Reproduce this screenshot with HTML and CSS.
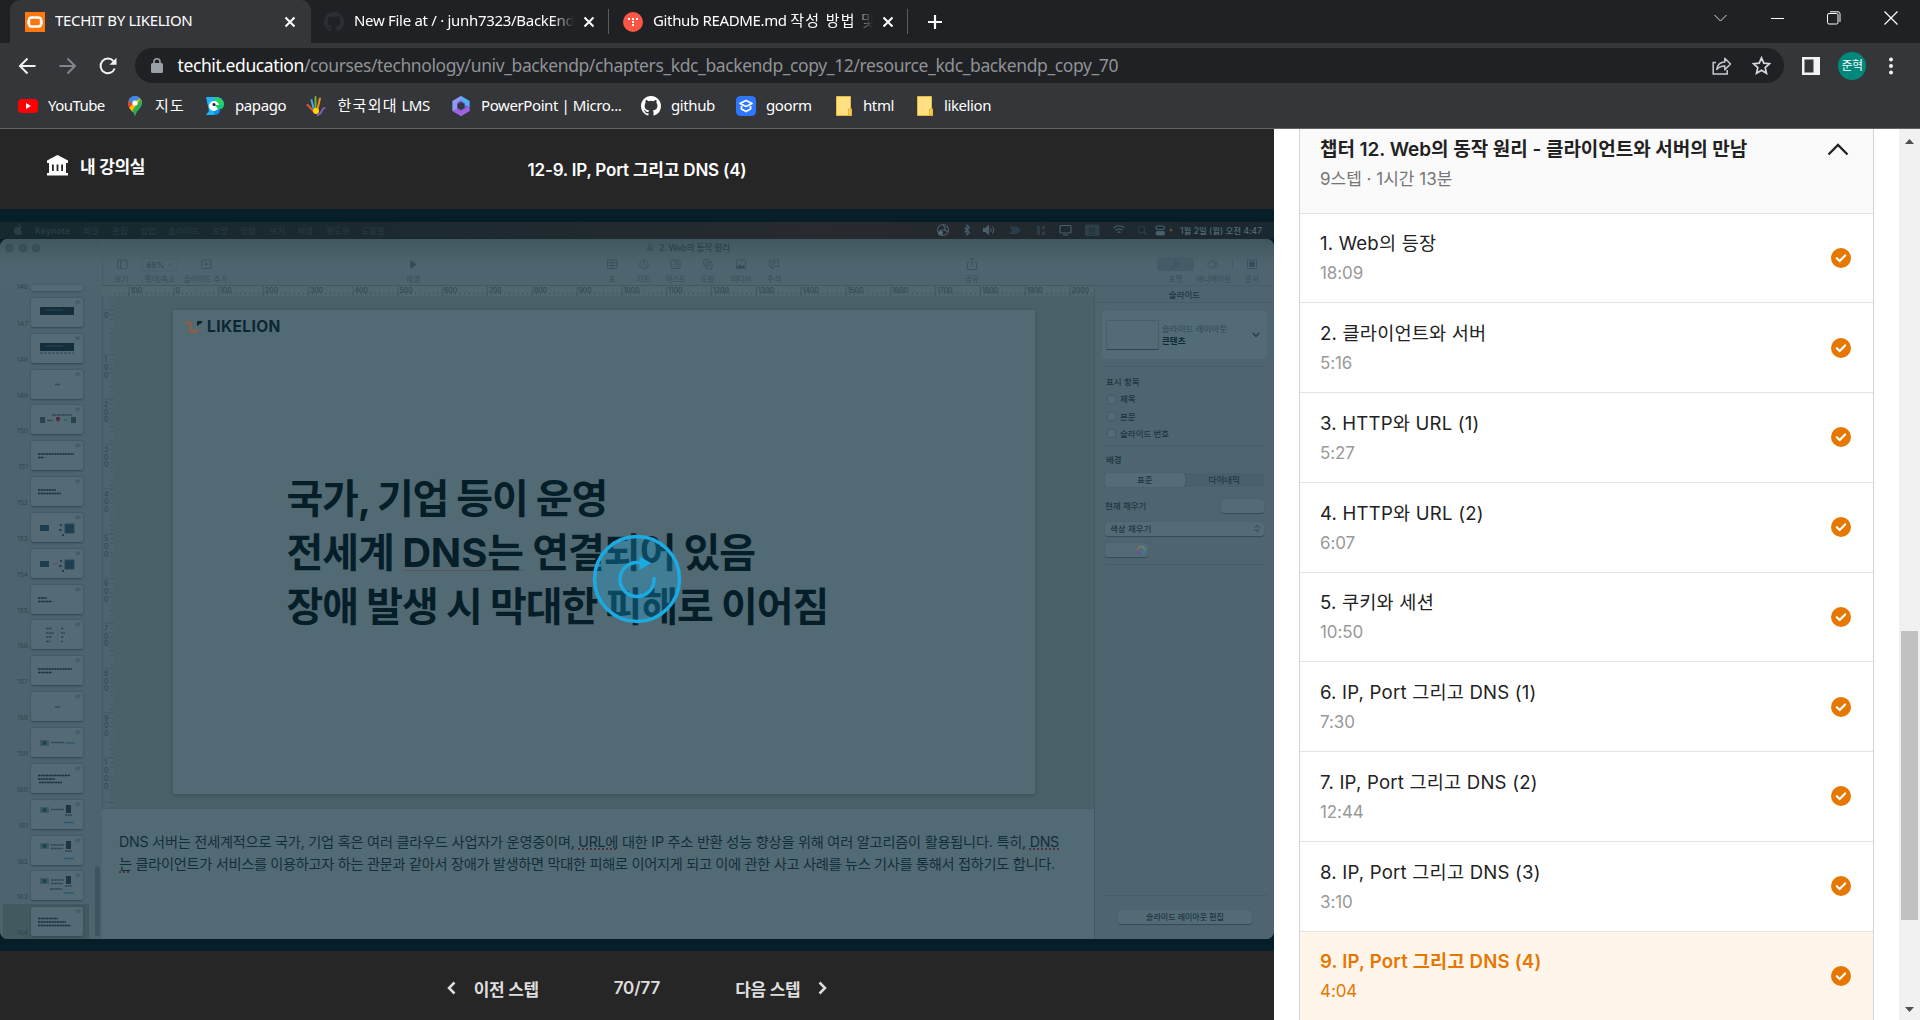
FILE: index.html
```html
<!DOCTYPE html>
<html lang="ko">
<head>
<meta charset="utf-8">
<title>TECHIT BY LIKELION</title>
<link rel="stylesheet" href="styles.css">
</head>
<body>
<svg class="defs" width="0" height="0">
  <symbol id="x" viewBox="0 0 12 12"><path d="M1.5 1.5l9 9M10.5 1.5l-9 9" stroke="#fff" stroke-width="2"/></symbol>
  <symbol id="octo" viewBox="0 0 16 16"><path fill-rule="evenodd" d="M8 0C3.58 0 0 3.58 0 8c0 3.54 2.29 6.53 5.47 7.59.4.07.55-.17.55-.38 0-.19-.01-.82-.01-1.49-2.01.37-2.53-.49-2.69-.94-.09-.23-.48-.94-.82-1.13-.28-.15-.68-.52-.01-.53.63-.01 1.08.58 1.23.82.72 1.21 1.87.87 2.33.66.07-.52.28-.87.51-1.07-1.78-.2-3.64-.89-3.64-3.95 0-.87.31-1.59.82-2.15-.08-.2-.36-1.02.08-2.12 0 0 .67-.21 2.2.82a7.6 7.6 0 014 0c1.53-1.04 2.2-.82 2.2-.82.44 1.1.16 1.92.08 2.12.51.56.82 1.27.82 2.15 0 3.07-1.87 3.75-3.65 3.95.29.25.54.73.54 1.48 0 1.07-.01 1.93-.01 2.2 0 .21.15.46.55.38A8.01 8.01 0 0016 8c0-4.42-3.58-8-8-8z"/></symbol>
  <symbol id="check" viewBox="0 0 20 20"><circle cx="10" cy="10" r="10" fill="#e67700"/><path d="M5.8 10.2l2.9 2.8 5.4-5.6" fill="none" stroke="#fff" stroke-width="2.2" stroke-linecap="round"/></symbol>
  <symbol id="folder" viewBox="0 0 16 20"><path d="M.5.5h14v12.500H16V19.500H.5z" fill="#ffe082" stroke="#e5b93c"/><path d="M12.500 19v-6h2.500v6z" fill="#ffd54f" stroke="#d9ab2e" stroke-width=".8"/></symbol>
  <symbol id="memo" viewBox="0 0 6 6"><path d="M.5.5h5v3.300H3l-1.500 1.700V3.800h-1z" fill="#465d68"/></symbol>
  <pattern id="ticks-h" x="71" width="4.48" height="10" patternUnits="userSpaceOnUse"><path d="M.5 7v3" stroke="#3b525d" stroke-width=".7"/></pattern>
  <pattern id="ticks-v" y="14" width="12" height="4.48" patternUnits="userSpaceOnUse"><path d="M8 .5h3.500" stroke="#3d545f" stroke-width=".7"/></pattern>
</svg>

<header class="browser">
  <div class="tabs">
    <div class="tab active">
      <svg width="20" height="20" viewBox="0 0 20 20"><rect width="20" height="20" fill="#ff7710"/><rect x="4" y="5.500" width="12" height="9" rx="2.500" fill="none" stroke="#fff" stroke-width="2.300"/><path d="M2.500 8v4.500M17.500 8v4.500" stroke="#ffd2ab"/></svg>
      <span class="tab-title t1">TECHIT BY LIKELION</span>
      <svg class="close" width="12" height="12"><use href="#x"/></svg>
    </div>
    <div class="tab second">
      <svg width="20" height="20" fill="#2b2f35"><use href="#octo"/></svg>
      <span class="tab-title fade t2">New File at / · junh7323/BackEnd</span>
      <svg class="close" width="12" height="12"><use href="#x"/></svg>
    </div>
    <div class="tab third">
      <svg width="20" height="20" viewBox="0 0 20 20"><circle cx="10" cy="10" r="10" fill="#ff5544"/><path d="M5 7h2M9 7h2M13 7h2M9 10h2M9 13h2" stroke="#fff" stroke-width="2"/></svg>
      <span class="tab-title fade t3">Github README.md <span class="ko">작성 방법 및</span></span>
      <svg class="close" width="12" height="12"><use href="#x"/></svg>
    </div>
    <svg class="plus" width="16" height="16" stroke="#fff" stroke-width="2.200"><path d="M8 1v14M1 8h14"/></svg>
    <div class="win">
      <svg width="15" height="14" fill="none" stroke="#ddd"><path d="M1.500 4l6 6 6-6"/></svg>
      <svg width="13" height="14" stroke="#fff"><path d="M0 7.500h13"/></svg>
      <svg width="14" height="14" fill="none" stroke="#fff"><rect x=".5" y="2.500" width="10.500" height="10.500" rx="1.500"/><path d="M3 .8h8a2 2 0 012 2v8"/></svg>
      <svg width="14" height="14" stroke="#fff" stroke-width="1.200"><path d="M.5.5l13 13M13.500.5l-13 13"/></svg>
    </div>
  </div>

  <div class="toolbar">
    <svg class="nav" width="18" height="18" fill="none" stroke="#f1f3f4" stroke-width="2"><path d="M17.500 9H2M9.500 1.500L2 9l7.500 7.500"/></svg>
    <svg class="nav" width="18" height="18" fill="none" stroke="#82858a" stroke-width="2"><path d="M.5 9H16M8.500 1.500L16 9l-7.500 7.500"/></svg>
    <svg class="nav" width="18" height="18" fill="none" stroke="#f1f3f4" stroke-width="2"><path d="M15.700 11.500A7.300 7.300 0 1114.500 4.200"/><path d="M17.500.8v7h-7z" fill="#f1f3f4" stroke="none"/></svg>
    <div class="omnibox">
      <svg width="12" height="15" viewBox="0 0 12 15"><rect y="5" width="12" height="10" rx="1.500" fill="#9aa0a6"/><path d="M3 6V3.800a3 3 0 016 0V6" fill="none" stroke="#9aa0a6" stroke-width="1.600"/></svg>
      <span class="url"><b>techit.education</b>/courses/technology/univ_backendp/chapters_kdc_backendp_copy_12/resource_kdc_backendp_copy_70</span>
      <svg class="share" width="20" height="20" fill="none" stroke="#c7cacf" stroke-width="1.500"><path d="M4 6.500H1.200V18h14v-4"/><path d="M4.800 13.500c.8-5 4-7.400 8-7.400V2.200l5.700 5.800-5.700 5.700V10c-3.600 0-6 1-8 3.500z" stroke-linejoin="round"/></svg>
      <svg class="star" width="19" height="19" viewBox="0 0 19 19" fill="none" stroke="#d5d8dc" stroke-width="1.700"><path d="M9.500 1.800l2.300 5.400 5.800.5-4.400 3.900 1.300 5.700-5-3-5 3 1.300-5.700-4.400-3.900 5.800-.5z"/></svg>
    </div>
    <svg class="side" width="18" height="18"><path d="M0 0h18v18H0z" fill="#f1f3f4"/><path d="M2.500 2.500h9v13h-9z" fill="#35363a"/></svg>
    <div class="avatar">준혁</div>
    <svg class="dots" width="4" height="18" fill="#f1f3f4"><circle cx="2" cy="2.500" r="2"/><circle cx="2" cy="9" r="2"/><circle cx="2" cy="15.500" r="2"/></svg>
  </div>

  <nav class="bookmarks">
    <a class="bm b1"><svg width="20" height="20"><rect y="3" width="20" height="14" rx="4" fill="#f00"/><path d="M8 7l5 3-5 3z" fill="#fff"/></svg><span>YouTube</span></a>
    <a class="bm b2"><svg width="20" height="20" viewBox="0 0 20 20"><path d="M10 0a7 7 0 00-7 7c0 5 5.500 7 7 13 1.500-6 7-8 7-13a7 7 0 00-7-7z" fill="#34a853"/><path d="M3.500 4.500L8 8.500l-3.500 3.800C3.200 10.500 2.400 7 3.500 4.500z" fill="#ea4335"/><path d="M4.200 12l8-9C15 1 17 4 17 7l-9.500 9z" fill="#fbbc04"/><path d="M10 0a7 7 0 00-6.200 3.900L8 7.500 15 2a7 7 0 00-5-2z" fill="#4285f4"/><path d="M15.500 2.700C18 6 17 10 14 13c-2 2-3 4-4 7-.7-3-1.500-4.200-2.600-5.500z" fill="#34a853"/><circle cx="10" cy="7" r="2.600" fill="#fff"/></svg><span class="ko">지도</span></a>
    <a class="bm b3"><svg width="20" height="20" viewBox="0 0 20 20"><path d="M1 1h10c6 0 8 4 8 8h-6l-3 10H1l3-4z" fill="#22b3f5"/><path d="M10 1c6 0 9 4 9 8h-9z" fill="#25d366"/><path d="M9 19c5 0 6-3 6-6l-6-3z" fill="#0b8de8"/><circle cx="9" cy="10" r="5" fill="#fff"/><path d="M10 9h9c0 3-3 5-6 4z" fill="#0ecb70"/><circle cx="9" cy="8.500" r="1.500" fill="#16203a"/></svg><span>papago</span></a>
    <a class="bm b4"><svg width="20" height="20" viewBox="0 0 20 20" fill="none" stroke-width="2" stroke-linecap="round"><path d="M5.500 4l2.200 9" stroke="#48a9d9"/><path d="M9.500 1v12" stroke="#66b32e"/><path d="M14 2.500L11.500 13" stroke="#f18a21"/><path d="M1.500 9l6 6" stroke="#e4572e"/><path d="M18.500 12c-3 0-2 6-7 7" stroke="#7a5cc0"/><circle cx="10" cy="15" r="3" fill="#ffd400"/></svg><span><span class="ko">한국외대</span> LMS</span></a>
    <a class="bm b5"><svg width="20" height="20" viewBox="0 0 20 20"><path d="M10 0l8.500 5v10L10 20l-8.500-5V5z" fill="#7b5be0"/><path d="M10 0l8.500 5v6L14 9V7l-4-2.500z" fill="#4bb4f5"/><path d="M10 0L1.500 5v10l4.500-2V7l4-3z" fill="#8f9bf0"/><path d="M6 13l4 2.500 8.500-5.500V15L10 20l-8.500-5z" fill="#a064e0"/><path d="M10 6l3.500 2v4L10 14l-3.500-2V8z" fill="#35363a"/></svg><span>PowerPoint | Micro...</span></a>
    <a class="bm b6"><svg width="20" height="20" fill="#fff"><use href="#octo"/></svg><span>github</span></a>
    <a class="bm b7"><svg width="20" height="20" viewBox="0 0 20 20"><rect width="20" height="20" rx="4.500" fill="#2f76ff"/><path d="M10 4.500l6 3-6 3-6-3z" fill="none" stroke="#fff" stroke-width="1.700" stroke-linejoin="round"/><path d="M5.500 10v3L10 15.500l4.500-2.500v-3" fill="none" stroke="#fff" stroke-width="1.800"/></svg><span>goorm</span></a>
    <a class="bm b8"><svg width="16" height="20"><use href="#folder"/></svg><span>html</span></a>
    <a class="bm b9"><svg width="16" height="20"><use href="#folder"/></svg><span>likelion</span></a>
  </nav>
</header>

<main class="page">
  <section class="lecture">
    <div class="lecture-head">
      <a class="room"><svg width="21" height="21" viewBox="0 0 21 21" fill="#fff"><path d="M10.500 0L21 5.500V8H0V5.500z"/><path d="M2 8h17v10H2z"/><path d="M0 18h21v2.500H0z"/><path d="M5 9.500h1.800V16H5zM9.600 9.500h1.800V16H9.600zM14.200 9.500H16V16h-1.800z" fill="#262626"/></svg><span>내 강의실</span></a>
      <h1>12-9. IP, Port 그리고 DNS (4)</h1>
    </div>

    <div class="video">
      <svg class="menubar" width="1274" height="17" font-size="8.500">
        <g fill="#2a3c44">
          <path d="M18 5c2-1.500 4-.5 4 0-1.500 1-1.500 4 .5 5-.8 2.500-2 3.500-4 2.500-3 1.500-5.500-2-4.500-5.500.5-2 2.500-2.800 4-2zM18 4c0-1.500 1-2.500 2-2.500 0 1.500-1 2.500-2 2.500z"/>
          <text x="35" y="11.500" font-weight="700" textLength="35">Keynote</text>
          <g text-anchor="middle"><text x="91" y="11.500">파일</text><text x="120" y="11.500">편집</text><text x="148" y="11.500">삽입</text><text x="184" y="11.500">슬라이드</text><text x="220" y="11.500">포맷</text><text x="248" y="11.500">정렬</text><text x="277" y="11.500">보기</text><text x="305" y="11.500">재생</text><text x="338" y="11.500">윈도우</text><text x="373" y="11.500">도움말</text></g>
        </g>
        <g fill="none" stroke="#46606c" stroke-width="1.100">
          <circle cx="943" cy="8" r="5.500"/><path d="M943 3c3 3 3 5 0 5s-4 2-4 4M943 8c2 0 4 1 5 2"/><circle cx="940.500" cy="11" r="2" fill="#56717d"/>
          <path d="M964.500 5.500l5 5-2.500 2.500V3l2.500 2.500-5 5"/>
          <path d="M983.500 6.500h2l3-2.500v8l-3-2.500h-2z" fill="#46606c"/><path d="M990.500 6q1.500 2 0 4M992.500 4.500q2.500 3.500 0 7"/>
          <path d="M1009 4.500h8l4 3.500-4 4h-8l3-4z" fill="#2b3e47" stroke="none"/><path d="M1037 4h3v9h-3zM1042 4h3v3.500h-3zM1042 9.500h3v3.500h-3z" fill="#2b3e47" stroke="none"/>
          <rect x="1060" y="3.500" width="11" height="7.500" rx="1"/><path d="M1063 13h5"/>
          <path d="M1113.500 6q5.500-4.500 11 0M1115.500 8.300q3.500-2.800 7 0M1117.500 10.500q1.500-1.200 3 0"/>
          <g stroke="#2d4049"><circle cx="1141.500" cy="7.500" r="3.200"/><path d="M1144 10l2.500 2.500"/></g>
          <rect x="1156" y="4" width="8.500" height="3.500" rx="1.700"/><rect x="1156" y="9.500" width="8.500" height="3.500" rx="1.700" fill="#46606c"/>
        </g>
        <rect x="1085" y="2.500" width="14.500" height="11.500" rx="2" fill="#2d4049"/><text x="1092.200" y="11.500" text-anchor="middle" fill="#1a2a32">한</text>
        <circle cx="1171" cy="8" r="1.500" fill="#694c22"/>
        <text x="1180" y="11.500" fill="#526d79" font-weight="500" textLength="82">1월 2일 (월) 오전 4:47</text>
      </svg>

      <div class="keynote">
        <svg class="kn-toolbar" width="1274" height="46" font-size="7.500">
          <g fill="#38505a" stroke="#2f4751" stroke-width=".6"><circle cx="9.500" cy="9" r="3.800"/><circle cx="23" cy="9" r="3.800"/><circle cx="36" cy="9" r="3.800"/></g>
          <text x="659" y="12" font-size="8.800" font-weight="500" fill="#2b424d" textLength="71">2. Web의 동작 원리</text>
          <rect x="647" y="7" width="6" height="5" rx="1" fill="#3c535e"/><path d="M648.500 7V6a1.500 1.500 0 013 0v1" fill="none" stroke="#3c535e"/>
          <path d="M102.500 0v46" stroke="#465d67"/>
          <rect x="142" y="19" width="35" height="13" rx="2.500" fill="none" stroke="#485f6a"/>
          <rect x="1157" y="18" width="37" height="14" rx="3" fill="#455c66"/>
          <path d="M1232.500 20v10" stroke="#455c66"/>
          <text x="146.500" y="28.500" font-size="8" fill="#314853">68%</text>
          <g fill="none" stroke="#3a525d">
            <rect x="117.500" y="21" width="9.500" height="8.500" rx="1"/><path d="M120.500 21v8.500M168.500 24.500l2 2 2-2"/>
            <rect x="201.500" y="21" width="9.500" height="8.500" rx="1"/><path d="M206 23v4.500M204 25.200h4.500"/>
            <path d="M410.500 21.500v8l6-4z" fill="#334b56"/>
            <rect x="607.500" y="21" width="9.500" height="8.500" rx="1"/><path d="M607.500 23.800h9.500M607.500 26.600h9.500M612.200 21v8.500"/>
            <circle cx="644" cy="25.500" r="4.300"/><path d="M644 21v4.500l3 3"/>
            <rect x="671" y="21" width="9" height="8.500" rx="1"/><text x="675.500" y="28" font-size="6.500" text-anchor="middle" stroke="none" fill="#334b56">가</text>
            <rect x="703.500" y="20.500" width="6" height="6.500" rx="2"/><rect x="706" y="23" width="6" height="7" rx="1"/>
            <rect x="736.500" y="21" width="9" height="8.500" rx="1"/><path d="M736.500 29.500l3-4 2 2 1.500-1.500 2.500 3.500z" fill="#334b56"/>
            <path d="M769.500 21h9v6.500h-4l-2.500 2.500v-2.500h-2.500zM771.500 23.200h5M771.500 25.200h3"/>
            <path d="M969.500 23.500h-2v7h9v-7h-2M972 27v-8M969.800 21l2.200-2.200 2.200 2.200"/>
            <path d="M1174.500 20l4.500 4.500-3 1.500-3 4.500-1.500-1.500 3.500-4z"/>
            <path d="M1207.500 25.500l4-4.500 4 4.500-4 4.500zM1213.500 21l4.500 4.500-4.500 4.500"/>
            <rect x="1247.500" y="21" width="9" height="8.500"/><rect x="1249.500" y="23" width="5" height="4.500" fill="#334b56"/>
          </g>
          <g text-anchor="middle" fill="#384f5a"><text x="121.500" y="42.500">보기</text><text x="160" y="42.500">확대/축소</text><text x="205.500" y="42.500">슬라이드 추가</text><text x="413" y="42.500">재생</text><text x="612" y="42.500">표</text><text x="643.500" y="42.500">차트</text><text x="675.500" y="42.500">텍스트</text><text x="707.500" y="42.500">도형</text><text x="741" y="42.500">미디어</text><text x="774" y="42.500">주석</text><text x="972" y="42.500">공유</text><text x="1175.500" y="42.500">포맷</text><text x="1213.500" y="42.500">애니메이션</text><text x="1252" y="42.500">문서</text></g>
        </svg>

        <div class="kn-body">
          <div class="navigator">
            <div class="row cut"><i>146</i><span class="thumb"></span></div>
            <div class="row"><i>147</i><svg class="thumb" width="52" height="29"><use href="#memo" x="44" y="2" width="6" height="6"/><path d="M9 9h34v8H9z" fill="#142f3b"/><path d="M14 12h18" stroke="#2b4752"/></svg></div>
            <div class="row"><i>148</i><svg class="thumb" width="52" height="29"><use href="#memo" x="44" y="2" width="6" height="6"/><path d="M9 9h34v8H9z" fill="#142f3b"/><path d="M14 12h18" stroke="#2b4752"/><path d="M9 19h34" stroke="#304954" stroke-dasharray="3 1"/></svg></div>
            <div class="row"><i>149</i><svg class="thumb" width="52" height="29"><use href="#memo" x="44" y="2" width="6" height="6"/><path d="M24 14.500h5" stroke="#284d68" stroke-width="1.500"/></svg></div>
            <div class="row"><i>150</i><svg class="thumb" width="52" height="29"><use href="#memo" x="44" y="2" width="6" height="6"/><path d="M21 10h20M16 15.500h6" stroke="#2f4a55" stroke-width="1.300" stroke-dasharray="4 .5"/><path d="M9 12h5v6H9zM40 12h5v6h-5z" fill="#29434d"/><path d="M25 12h4v3l-2 2-2-2z" fill="#502e40"/><path d="M33 14h3v2h-3z" fill="#2d6b50"/></svg></div>
            <div class="row"><i>151</i><svg class="thumb" width="52" height="29"><use href="#memo" x="44" y="2" width="6" height="6"/><path d="M7 13h36M7 16.500h6" class="ink"/></svg></div>
            <div class="row"><i>152</i><svg class="thumb" width="52" height="29"><use href="#memo" x="44" y="2" width="6" height="6"/><path d="M7 13h18M7 16.500h23" class="ink"/></svg></div>
            <div class="row"><i>153</i><svg class="thumb" width="52" height="29"><use href="#memo" x="44" y="2" width="6" height="6"/><path d="M9 12h9v6H9z" fill="#1e3e50"/><path d="M34 11h9v9h-9z" fill="#1e3e50" stroke="#2b4855"/><path d="M29 12h2M28 17h3M31 22h2" class="ink"/></svg></div>
            <div class="row"><i>154</i><svg class="thumb" width="52" height="29"><use href="#memo" x="44" y="2" width="6" height="6"/><path d="M9 12h9v6H9z" fill="#1e3e50"/><path d="M34 11h9v9h-9z" fill="#1e3e50" stroke="#2b4855"/><path d="M29 12h2M28 17h3M31 22h2" class="ink"/><path d="M22 14.500h5" stroke="#6b4b58"/></svg></div>
            <div class="row"><i>155</i><svg class="thumb" width="52" height="29"><use href="#memo" x="44" y="2" width="6" height="6"/><path d="M7 13h9M7 16.500h14" class="ink"/></svg></div>
            <div class="row"><i>156</i><svg class="thumb" width="52" height="29"><use href="#memo" x="44" y="2" width="6" height="6"/><path d="M15 8.500h6M15 13h8M15 17h6M15 21.500h4M30 8.500h3M30 13h4M30 17h3M30 21.500h2" class="ink soft"/><path d="M26.500 7v16" stroke="#476069" stroke-width=".6"/></svg></div>
            <div class="row"><i>157</i><svg class="thumb" width="52" height="29"><use href="#memo" x="44" y="2" width="6" height="6"/><path d="M7 13h34M7 16.500h14" class="ink"/></svg></div>
            <div class="row"><i>158</i><svg class="thumb" width="52" height="29"><use href="#memo" x="44" y="2" width="6" height="6"/><path d="M24 15h5" class="ink soft"/></svg></div>
            <div class="row"><i>159</i><svg class="thumb" width="52" height="29"><use href="#memo" x="44" y="2" width="6" height="6"/><path d="M9 12h9v6H9z" fill="#3e5962"/><circle cx="13.500" cy="15" r="2" fill="#1b424c"/><path d="M20 14.500h13" class="ink soft"/><path d="M34 15h10" stroke="#2e5873" stroke-width="1.500"/></svg></div>
            <div class="row"><i>160</i><svg class="thumb" width="52" height="29"><use href="#memo" x="44" y="2" width="6" height="6"/><path d="M7 11.500h32M7 15h17M8 18.500h23" class="ink"/></svg></div>
            <div class="row"><i>161</i><svg class="thumb" width="52" height="29"><use href="#memo" x="44" y="2" width="6" height="6"/><path d="M9 7h9v6H9z" fill="#3e5962"/><circle cx="13.500" cy="10" r="2" fill="#1b424c"/><path d="M20 9.500h13M34 15h7" class="ink soft"/><path d="M35 5h5v8h-5z" fill="#1b3744"/><path d="M33 22.500h10" stroke="#2e5873" stroke-width="1.500"/></svg></div>
            <div class="row"><i>162</i><svg class="thumb" width="52" height="29"><use href="#memo" x="44" y="2" width="6" height="6"/><path d="M9 7h9v6H9z" fill="#3e5962"/><circle cx="13.500" cy="10" r="2" fill="#1b424c"/><path d="M20 9h13M20 12.500h12M34 15h7" class="ink soft"/><path d="M35 5h5v8h-5z" fill="#1b3744"/><path d="M33 22.500h10" stroke="#2e5873" stroke-width="1.500"/></svg></div>
            <div class="row"><i>163</i><svg class="thumb" width="52" height="29"><use href="#memo" x="44" y="2" width="6" height="6"/><path d="M9 7h9v6H9z" fill="#3e5962"/><circle cx="13.500" cy="10" r="2" fill="#1b424c"/><path d="M20 9h13M20 12.500h12M19 18h12M34 15h7" class="ink soft"/><path d="M35 5h5v8h-5z" fill="#1b3744"/><path d="M33 22h10" stroke="#2e5873" stroke-width="1.500"/></svg></div>
            <div class="row current"><i>164</i><svg class="thumb" width="52" height="29"><use href="#memo" x="44" y="2" width="6" height="6"/><path d="M7 11.500h20M7 15h28M7 18.500h33" class="ink"/></svg></div>
            <div class="nav-scroll"></div>
          </div>

          <div class="workspace">
            <svg class="ruler-h" width="992" height="11" font-size="7">
              <rect width="992" height="11" fill="#50676f"/><rect x="12" width="980" height="10" fill="url(#ticks-h)"/>
              <path d="M0 .5h992" stroke="#425963"/>
              <path d="M27.200 1v10M72 1v10M116.800 1v10M161.600 1v10M206.400 1v10M251.200 1v10M296 1v10M340.800 1v10M385.600 1v10M430.400 1v10M475.200 1v10M520 1v10M564.800 1v10M609.600 1v10M654.400 1v10M699.200 1v10M744 1v10M788.800 1v10M833.600 1v10M878.400 1v10M923.200 1v10M968 1v10" stroke="#3d545f" stroke-width=".8"/>
              <g fill="#2c434e"><text x="28.500" y="7.800">100</text><text x="73.500" y="7.800">0</text><text x="118" y="7.800">100</text><text x="163" y="7.800">200</text><text x="208" y="7.800">300</text><text x="252.500" y="7.800">400</text><text x="297.500" y="7.800">500</text><text x="342" y="7.800">600</text><text x="387" y="7.800">700</text><text x="432" y="7.800">800</text><text x="476.500" y="7.800">900</text><text x="521.500" y="7.800">1000</text><text x="566" y="7.800">1100</text><text x="611" y="7.800">1200</text><text x="656" y="7.800">1300</text><text x="700.500" y="7.800">1400</text><text x="745.500" y="7.800">1500</text><text x="790" y="7.800">1600</text><text x="835" y="7.800">1700</text><text x="880" y="7.800">1800</text><text x="924.500" y="7.800">1900</text><text x="969.500" y="7.800">2000</text></g>
            </svg>
            <div class="canvas">
              <svg class="ruler-v" width="12" height="512" font-size="7">
                <rect width="12" height="512" fill="#4d646e"/><rect y="3" width="12" height="509" fill="url(#ticks-v)"/>
                <path d="M.5 0v512M0 13.500h12M0 58.300h12M0 103.100h12M0 147.900h12M0 192.700h12M0 237.500h12M0 282.300h12M0 327.100h12M0 371.900h12M0 416.700h12M0 461.500h12M0 506.300h12" stroke="#425963" stroke-width=".8"/>
                <g fill="#2c434e"><text x="2" y="21.500">0</text>
                <text><tspan x="2" y="66">1</tspan><tspan x="2" y="73.800">0</tspan><tspan x="2" y="81.500">0</tspan></text>
                <text><tspan x="2" y="111">2</tspan><tspan x="2" y="118.700">0</tspan><tspan x="2" y="126.400">0</tspan></text>
                <text><tspan x="2" y="155.800">3</tspan><tspan x="2" y="163.500">0</tspan><tspan x="2" y="171.200">0</tspan></text>
                <text><tspan x="2" y="200.600">4</tspan><tspan x="2" y="208.300">0</tspan><tspan x="2" y="216">0</tspan></text>
                <text><tspan x="2" y="245.400">5</tspan><tspan x="2" y="253.100">0</tspan><tspan x="2" y="260.800">0</tspan></text>
                <text><tspan x="2" y="290.200">6</tspan><tspan x="2" y="297.900">0</tspan><tspan x="2" y="305.600">0</tspan></text>
                <text><tspan x="2" y="335">7</tspan><tspan x="2" y="342.700">0</tspan><tspan x="2" y="350.400">0</tspan></text>
                <text><tspan x="2" y="379.800">8</tspan><tspan x="2" y="387.500">0</tspan><tspan x="2" y="395.200">0</tspan></text>
                <text><tspan x="2" y="424.600">9</tspan><tspan x="2" y="432.300">0</tspan><tspan x="2" y="440">0</tspan></text>
                <text><tspan x="2" y="469.400">1</tspan><tspan x="2" y="477.100">0</tspan><tspan x="2" y="484.800">0</tspan><tspan x="2" y="492.500">0</tspan></text></g>
              </svg>
              <article class="slide">
                <div class="brand"><svg width="18" height="12"><path d="M0 0h6.500v8.500H13V12H4V3.500H1.500z" fill="#87604b"/><path d="M12 0h6l-2.500 3h-1.500v1.500H12z" fill="#0c2732"/></svg><span>LIKELION</span></div>
                <p><span class="l1">국가, 기업 등이 운영</span><br><span class="l2">전세계 <u>DNS는</u> 연결되어 있음</span><br><span class="l3">장애 발생 시 막대한 피해로 이어짐</span></p>
              </article>
            </div>
            <div class="notes"><span class="n1">DNS 서버는 전세계적으로 국가, 기업 혹은 여러 클라우드 사업자가 운영중이며, <u>URL에</u> 대한 IP 주소 반환 성능 향상을 위해 여러 알고리즘이 활용됩니다. 특히, <u>DNS</u></span><br><span class="n2"><u>는</u> 클라이언트가 서비스를 이용하고자 하는 관문과 같아서 장애가 발생하면 막대한 피해로 이어지게 되고 이에 관한 사고 사례를 뉴스 기사를 통해서 접하기도 합니다.</span></div>
          </div>

          <aside class="inspector">
            <div class="ins-title">슬라이드</div>
            <div class="layout-card"><span class="mini"></span><div>슬라이드 레이아웃<br><b>콘텐츠</b></div><svg width="8" height="6" fill="none" stroke="#243c47" stroke-width="1.300"><path d="M1 1l3 3.500L7 1"/></svg></div>
            <hr>
            <div class="ins-head h1">표시 항목</div>
            <div class="opt"><span></span>제목</div>
            <div class="opt"><span></span>본문</div>
            <div class="opt"><span></span>슬라이드 번호</div>
            <hr class="tight">
            <div class="ins-head h2">배경</div>
            <div class="seg"><b>표준</b><span>다이내믹</span></div>
            <div class="fill-row"><span>현재 채우기</span><span class="field"></span></div>
            <div class="select">색상 채우기<svg width="6" height="9" fill="none" stroke="#243c47"><path d="M1 3.500l2-2 2 2M1 5.500l2 2 2-2"/></svg></div>
            <div class="swatch"><svg width="10" height="10" fill="none" stroke-width="1.800"><path d="M5 1.500A3.500 3.500 0 018.500 5" stroke="#5f8a70"/><path d="M8.500 5A3.500 3.500 0 015 8.500" stroke="#3f78a8"/><path d="M5 8.500A3.500 3.500 0 011.500 5" stroke="#70508f"/><path d="M1.500 5A3.500 3.500 0 015 1.500" stroke="#8a6a68"/></svg></div>
            <hr>
            <div class="ins-foot"><button>슬라이드 레이아웃 편집</button></div>
          </aside>
        </div>
      </div>

      <svg class="replay" width="90" height="90" viewBox="0 0 90 90"><circle cx="45" cy="45" r="42.500" fill="#1caae2" fill-opacity=".3" stroke="#1caae2" stroke-width="3.500"/><path d="M62 44.500A17 17 0 1145 28.500h3" fill="none" stroke="#1caae2" stroke-width="3.500" stroke-linecap="round"/><path d="M47.500 22.500L59 29l-11.500 7z" fill="#1caae2"/></svg>
    </div>

    <div class="steps">
      <a class="prev"><svg width="9" height="14" fill="none" stroke="#dedede" stroke-width="2.500"><path d="M7.500 1.500L2 7l5.500 5.500"/></svg><span>이전 스텝</span></a>
      <span class="count">70/77</span>
      <a class="next"><span>다음 스텝</span><svg width="9" height="14" fill="none" stroke="#dedede" stroke-width="2.500"><path d="M1.500 1.500L7 7l-5.500 5.500"/></svg></a>
    </div>
  </section>

  <aside class="curriculum">
    <div class="chapter">
      <div><h2>챕터 12. Web의 동작 원리 - 클라이언트와 서버의 만남</h2><p>9스텝 · 1시간 13분</p></div>
      <svg width="22" height="13" fill="none" stroke="#222" stroke-width="2.300"><path d="M1.500 11.500L11 2l9.500 9.500"/></svg>
    </div>
    <ol>
      <li><div><h3>1. Web의 등장</h3><time>18:09</time></div><svg width="20" height="20"><use href="#check"/></svg></li>
      <li><div><h3>2. 클라이언트와 서버</h3><time>5:16</time></div><svg width="20" height="20"><use href="#check"/></svg></li>
      <li><div><h3>3. HTTP와 URL (1)</h3><time>5:27</time></div><svg width="20" height="20"><use href="#check"/></svg></li>
      <li><div><h3>4. HTTP와 URL (2)</h3><time>6:07</time></div><svg width="20" height="20"><use href="#check"/></svg></li>
      <li><div><h3>5. 쿠키와 세션</h3><time>10:50</time></div><svg width="20" height="20"><use href="#check"/></svg></li>
      <li><div><h3>6. IP, Port 그리고 DNS (1)</h3><time>7:30</time></div><svg width="20" height="20"><use href="#check"/></svg></li>
      <li><div><h3>7. IP, Port 그리고 DNS (2)</h3><time>12:44</time></div><svg width="20" height="20"><use href="#check"/></svg></li>
      <li><div><h3>8. IP, Port 그리고 DNS (3)</h3><time>3:10</time></div><svg width="20" height="20"><use href="#check"/></svg></li>
      <li class="now"><div><h3>9. IP, Port 그리고 DNS (4)</h3><time>4:04</time></div><svg width="20" height="20"><use href="#check"/></svg></li>
    </ol>
  </aside>

  <div class="scrollbar">
    <svg width="9" height="5"><path d="M0 5l4.500-5L9 5z" fill="#505050"/></svg>
    <div class="thumb-bar"></div>
    <svg width="9" height="5"><path d="M0 0l4.500 5L9 0z" fill="#505050"/></svg>
  </div>
</main>
</body>
</html>
```
FILE: styles.css
```css
* { box-sizing: border-box; }
body {
  margin: 0; width: 1920px; height: 1020px; overflow: hidden;
  display: flex; flex-direction: column; background: #fff;
  font-family: Inter, "Noto Sans CJK KR", sans-serif;
}
svg { display: block; flex: none; }
.defs { position: absolute; }
h1, h2, h3, p, ol { margin: 0; padding: 0; font-weight: 400; }

/* browser chrome */
.browser { height: 129px; flex: none; background: #35363a; border-bottom: 1px solid #626367; color: #fff; font-family: "Noto Sans", "Noto Sans CJK KR", sans-serif; }
.tabs { height: 43px; background: #202124; display: flex; align-items: center; }
.tab { display: flex; align-items: center; height: 43px; font-size: 15px; }
.tab-title { white-space: nowrap; overflow: hidden; line-height: 24px; margin: -3px 0 0 10px; }
.tab .close { margin-left: auto; }
.active { width: 301px; margin-left: 10px; padding: 0 15px; background: #35363a; border-radius: 10px 10px 0 0; }
.second { width: 298px; padding: 0 14px 0 13px; }
.third { width: 299px; padding: 0 14px 0 14px; }
.second, .third { background: linear-gradient(#5a5c60, #5a5c60) right center / 1px 25px no-repeat; }
.fade { width: 220px; -webkit-mask: linear-gradient(90deg, #000 90%, transparent 100%); mask: linear-gradient(90deg, #000 90%, transparent 100%); }
.t1 { letter-spacing: -.33px; }
.t2 { letter-spacing: -.3px; }
.t3 { letter-spacing: -.35px; }
.ko { letter-spacing: 1.300px; }
.plus { margin-left: 19px; }
.win { margin-left: auto; margin-right: 22px; display: flex; gap: 43px; height: 36px; align-items: center; margin-bottom: 7px; }
.toolbar { height: 45px; display: flex; align-items: center; padding-left: 18px; }
.nav { margin-right: 22.500px; }
.omnibox { width: 1649px; height: 35px; margin-left: -4.500px; border-radius: 18px; background: #202124; display: flex; align-items: center; padding: 0 13px 0 16px; }
.url { margin: -1px 0 0 14.500px; font-size: 17.500px; color: #8f9296; white-space: nowrap; letter-spacing: -.4px; }
.url b { font-weight: 400; color: #fff; }
.share { margin-left: auto; }
.star { margin-left: 20px; }
.side { margin-left: 18px; }
.avatar { width: 28px; height: 28px; margin-left: 18px; border-radius: 50%; background: #00897b; font-size: 12px; line-height: 27px; text-align: center; letter-spacing: -.5px; }
.dots { margin-left: 23px; }
.bookmarks { height: 36px; display: grid; grid-template-columns: 107px 80px 101px 145px 190px 95px 97px 81px 90px; padding-left: 18px; align-items: center; font-size: 15px; }
.bm { display: flex; align-items: center; white-space: nowrap; letter-spacing: -.4px; line-height: 24px; }
.bm > span { margin: -2px 0 0 10px; }
.bm.b1 { letter-spacing: -.55px; }
.bm.b4 > span, .bm.b9 > span, .bm.b8 > span { margin-left: 11.500px; }
.b8 svg, .b9 svg { margin-left: 2.500px; }

/* lecture */
.page { flex: 1; display: flex; min-height: 0; }
.lecture { width: 1274px; display: flex; flex-direction: column; background: #262626; color: #fff; }
.lecture-head { height: 80px; flex: none; display: grid; grid-template-columns: 1fr auto 1fr; align-items: center; padding-left: 47px; }
.room { display: flex; align-items: center; gap: 12px; font-size: 17px; font-weight: 600; margin-top: -8px; letter-spacing: -.35px; }
.lecture-head h1 { font-size: 17px; font-weight: 600; letter-spacing: -.2px; margin: -2px 0 0 -47px; }
.video { height: 742px; background: #051e28; padding-top: 13px; position: relative; }
.menubar { background: linear-gradient(90deg, #15292f, #1f2a2f 45%, #282a2e 65%, #1a2830); }
.keynote { height: 700px; border-radius: 8px; overflow: hidden; background: #4e656f; color: #203842; }
.kn-toolbar { background: linear-gradient(#40575f, #4e656f 55%); }
.kn-body { height: 654px; display: flex; }
.navigator { width: 102px; position: relative; background: #4d646e; display: flex; flex-direction: column; gap: 6.250px; }
.row { height: 29.600px; flex: none; display: flex; align-items: flex-end; }
.row i { width: 28px; font: normal 6.800px Inter; text-align: right; color: #2f4752; line-height: 6px; }
.row .thumb { width: 52px; height: 29px; margin-left: 3px; border-radius: 2px; background: #546b75; box-shadow: 0 .5px 2px #2f4752; }
.row.cut { height: 6px; }
.row.cut i { line-height: 9px; height: 9px; }
.row.cut .thumb { height: 6px; }
.row.current { width: 80px; margin-left: 6px; background: #435960; box-shadow: 0 0 0 3px #435960; }
.row.current i { width: 22px; }
.ink { stroke: #17313c; stroke-width: 1.500; stroke-dasharray: 2.200 .5; }
.soft { stroke: #2c4752; stroke-width: 1.300; }
.nav-scroll { position: absolute; left: 95px; top: 581px; width: 5px; height: 70px; border-radius: 3px; background: #3d555e; }
.workspace { width: 992px; display: flex; flex-direction: column; }
.canvas { height: 512px; display: flex; background: #4a6169; }
.slide { width: 862px; height: 484.500px; margin: 13.500px 0 0 59px; background: #526a74; box-shadow: 0 1px 5px #374e58; padding: 11px 0 0 12px; color: #051e28; }
.brand { display: flex; align-items: center; gap: 4px; height: 12px; font-size: 15.500px; font-weight: 700; color: #0c2732; letter-spacing: .4px; }
.slide p { margin: 139.500px 0 0 101.500px; font: 700 40px/54px Inter, "Noto Sans CJK KR", sans-serif; white-space: nowrap; letter-spacing: -1.200px; }
.slide .l2 { letter-spacing: -1.050px; }
.slide .l3 { letter-spacing: -1.100px; }
.slide u { letter-spacing: -.200px; text-decoration: underline; text-decoration-color: #5b5360; text-decoration-thickness: 1px; text-underline-offset: 3px; text-decoration-skip-ink: none; }
.notes { flex: 1; background: #526a74; border-top: 1px solid #475e68; padding: 21.500px 0 0 17px; font-size: 14.200px; line-height: 22.500px; color: #142e39; white-space: nowrap; }
.n1 { letter-spacing: -.23px; }
.n2 { letter-spacing: -.3px; }
.notes u { text-decoration: underline dotted #4a3442 1.500px; text-underline-offset: 2px; text-decoration-skip-ink: none; }
.inspector { width: 180px; border-left: 1px solid #435a64; background: #4e656f; display: flex; flex-direction: column; padding: 0 7px 0 10px; font-size: 8.500px; font-weight: 500; color: #1d3641; line-height: 12px; }
.ins-title { height: 18px; margin: 0 -7px 8px -10px; line-height: 18px; text-align: center; border-bottom: 1px solid #485f69; border-top: 1px solid #485f69; }
.layout-card { height: 48px; margin-left: -3px; border-radius: 3px; background: #536b75; display: flex; align-items: center; padding: 0 7px 0 4px; font-weight: 400; color: #2f4752; }
.layout-card b { color: #102a35; }
.mini { width: 53px; height: 30px; border: 1px solid #485f69; border-bottom-color: #2f4752; margin-right: 3px; }
.layout-card svg { margin-left: auto; }
.inspector hr { width: 158px; margin: 7px 0 0 1px; border: 0; border-top: 1px solid #465d67; flex: none; }
.ins-head { margin-left: 1px; }
.ins-head.h1 { margin-top: 9px; margin-bottom: 2.500px; }
.opt { height: 17.400px; display: flex; align-items: center; gap: 4px; }
.opt span { width: 9px; height: 9px; margin-left: 2px; border-radius: 2px; background: #546c76; border: 1px solid #455c67; }
.inspector hr.tight { margin-top: 2px; }
.ins-head.h2 { margin-top: 8px; margin-bottom: 7.500px; }
.seg { width: 159px; height: 14px; display: flex; border-radius: 3px; background: #486069; text-align: center; line-height: 14px; }
.seg b, .seg span { flex: 1; font-weight: 500; }
.seg b { background: #546c76; border-radius: 3px; box-shadow: 0 0 1px #2f4752; }
.fill-row { width: 159px; margin-top: 11.500px; height: 14px; display: flex; justify-content: space-between; align-items: center; }
.field { width: 43px; height: 14px; }
.field, .select, .swatch, .ins-foot button { border-radius: 3px; background: #536b75; box-shadow: 0 .5px 1px #334b56; }
.select { width: 159px; height: 14px; margin-top: 9px; padding: 0 4px 0 5px; display: flex; align-items: center; justify-content: space-between; }
.swatch { width: 43px; height: 14px; margin-top: 7px; display: flex; align-items: center; justify-content: flex-end; padding-right: 2px; }
.ins-foot { margin-top: auto; height: 44px; border-top: 1px solid #465d67; text-align: center; padding-top: 14px; }
.ins-foot button { width: 134px; height: 14px; border: 0; padding: 0; display: block; margin-left: 13px; font: 500 8px/14px Inter, "Noto Sans CJK KR", sans-serif; color: #1d3641; }
.replay { position: absolute; left: 592px; top: 324.500px; }

.steps { height: 69px; display: flex; align-items: center; justify-content: center; gap: 75px; font-size: 17px; font-weight: 600; color: #dedede; padding-top: 5px; letter-spacing: -.4px; }
.count { letter-spacing: -.1px; }
.prev, .next { display: flex; align-items: center; gap: 18px; }

/* curriculum */
.curriculum { width: 575px; margin-left: 25px; border: solid #d5d5d5; border-width: 0 1px; flex: none; }
.chapter { height: 83.600px; background: #fafafa; display: flex; justify-content: space-between; padding: 7px 24px 0 20px; }
.chapter h2 { font-size: 19px; font-weight: 600; line-height: 27px; color: #222; letter-spacing: -.05px; white-space: nowrap; }
.chapter p { font-size: 17px; line-height: 24px; margin-top: 4px; color: #767676; letter-spacing: 0; }
.chapter svg { margin-top: 6.500px; }
ol { list-style: none; }
li { height: 89.750px; border-top: 1px solid #e2e2e2; display: flex; justify-content: space-between; align-items: center; padding: 0 22.500px 0 20px; }
li h3 { font-size: 18.600px; line-height: 26px; color: #222; letter-spacing: .2px; }
li time { display: block; margin-top: 5px; font-size: 17px; line-height: 24px; color: #999; letter-spacing: -.1px; }
.now { background: #fff5eb; }
.now h3, .now time { color: #e67700; }
.now h3 { font-weight: 600; }
.scrollbar { margin-left: auto; width: 21px; background: #f1f1f1; display: flex; flex-direction: column; align-items: center; padding: 10px 0 8px; }
.thumb-bar { width: 17px; height: 289px; background: #c1c1c1; margin: 487px 0 auto; }
```
